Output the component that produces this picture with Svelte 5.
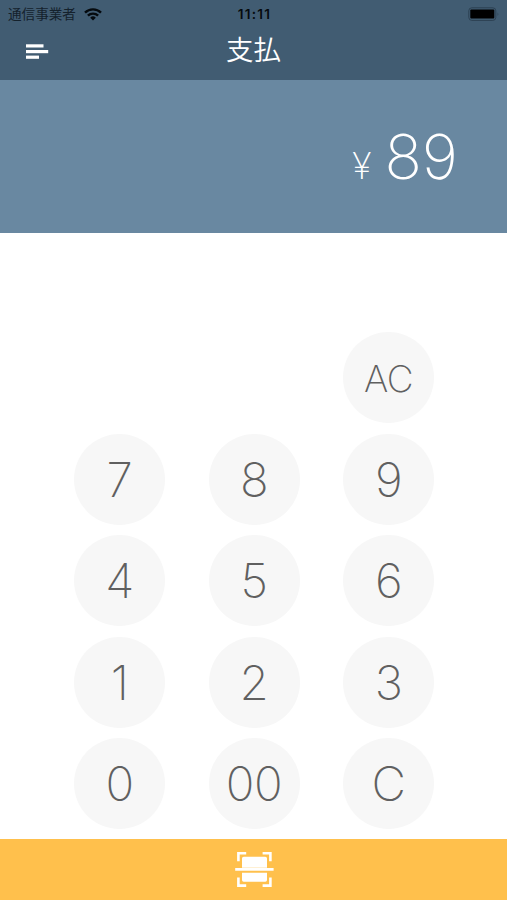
<script>
  const keys = ['AC', '7', '8', '9', '4', '5', '6', '1', '2', '3', '0', '00', 'C'];
</script>

<div class="screen">
  <header>
    <div class="status">
      <div class="carrier">
        <span>通信事業者</span>
        <svg width="18" height="13" viewBox="0 0 18 13" fill="none" stroke="#050a0e" stroke-width="2.4">
          <path d="M1 4.7a11.4 11.4 0 0 1 16 0" />
          <path d="M3.9 7.7a7.2 7.2 0 0 1 10.2 0" />
          <path d="M9 12.5L6.2 9.7a4 4 0 0 1 5.6 0z" fill="#050a0e" stroke="none" />
        </svg>
      </div>
      <time>11:11</time>
      <svg class="battery" width="32" height="15" viewBox="0 0 32 15">
        <rect x=".8" y=".8" width="27" height="12.6" rx="3" fill="none" stroke="#2c4052" />
        <rect x="2.3" y="2.6" width="24" height="9" rx="1" fill="#000" />
        <path d="M29.6 5.2q1.6 1.9 0 3.8z" fill="#2c4052" />
      </svg>
    </div>
    <div class="nav">
      <button class="menu" aria-label="menu">
        <svg width="23" height="16" viewBox="0 0 23 16" fill="#fff">
          <rect x="0" y="0.3" width="17.5" height="3.2" />
          <rect x="0" y="6" width="22.2" height="3.2" />
          <rect x="0" y="11.6" width="13" height="3.2" />
        </svg>
      </button>
      <h1>支払</h1>
    </div>
  </header>
  <section class="amount">
    <span class="yen">¥</span><span class="value">89</span>
  </section>
  <main>
    {#each keys as key}
      <button class="key" class:ac={key === 'AC'}>{key}</button>
    {/each}
  </main>
  <footer>
    <svg width="40" height="36" viewBox="0 0 40 36" fill="none" stroke="#fff">
      <path d="M4.4 10.2V2.2h7.8M28.6 2.2h7.8v8M4.4 26.6v8h7.8M28.6 34.6h7.8v-8" stroke-width="2.6" />
      <path d="M8 16.8V7.5Q8 5.8 9.7 5.8h21.6Q33 5.8 33 7.5v9.3zM8 21.8h25v7.3q0 1.7-1.7 1.7H9.7Q8 30.8 8 29.1z" fill="#fff" stroke="none" />
      <path d="M1.2 18.3h38.4" stroke-width="2.8" />
    </svg>
  </footer>
</div>

<style>
  :global(body) { margin: 0; background: #fff; }
  .screen {
    width: 507px;
    height: 900px;
    display: flex;
    flex-direction: column;
    overflow: hidden;
    background: #fff;
    font-family: Inter, "Noto Sans CJK JP", sans-serif;
  }
  button { border: 0; padding: 0; margin: 0; font-family: inherit; background: none; }
  svg { display: block; }
  header { height: 79.5px; background: #415c72; flex: none; }
  .status {
    height: 27px;
    display: grid;
    grid-template-columns: 1fr auto 1fr;
    align-items: center;
    padding: 0 7px 0 8px;
    color: #14212c;
  }
  .carrier { display: flex; align-items: center; gap: 8px; font-size: 13.6px; line-height: 26px; }
  time {
    color: #050a0e;
    font-size: 13.6px;
    font-weight: 600;
    line-height: 27px;
    letter-spacing: 1.2px;
    padding-top: 1px;
    padding-left: 1px;
  }
  .battery { justify-self: end; }
  .nav {
    height: 52px;
    display: grid;
    grid-template-columns: 1fr auto 1fr;
    padding: 0 26px;
  }
  .menu { justify-self: start; align-self: start; margin-top: 17px; }
  h1 { margin: 0; font-size: 27.5px; line-height: 46px; font-weight: 350; color: #fff; }
  .amount {
    height: 153.5px;
    flex: none;
    background: #6988a1;
    color: #fff;
    display: flex;
    justify-content: flex-end;
    align-items: baseline;
    padding-right: 49px;
    box-sizing: border-box;
    line-height: 153px;
    font-weight: 200;
  }
  .yen { font-size: 36px; margin-right: 13px; }
  .value { font-size: 62px; letter-spacing: 0; }
  main {
    flex: 1;
    display: grid;
    grid-template-columns: repeat(3, 91px);
    grid-auto-rows: 91px;
    column-gap: 43.5px;
    row-gap: 10.5px;
    padding: 99px 0 0 74px;
  }
  .key {
    border-radius: 50%;
    background: #f7f7f7;
    color: #606060;
    font-size: 47.5px;
    font-weight: 200;
    line-height: 91px;
    text-align: center;
    letter-spacing: -0.5px;
  }
  .ac { grid-column: 3; font-size: 37px; line-height: 93px; }
  footer {
    height: 61.5px;
    flex: none;
    background: #ffc04c;
    display: flex;
    justify-content: center;
    align-items: center;
  }
</style>
